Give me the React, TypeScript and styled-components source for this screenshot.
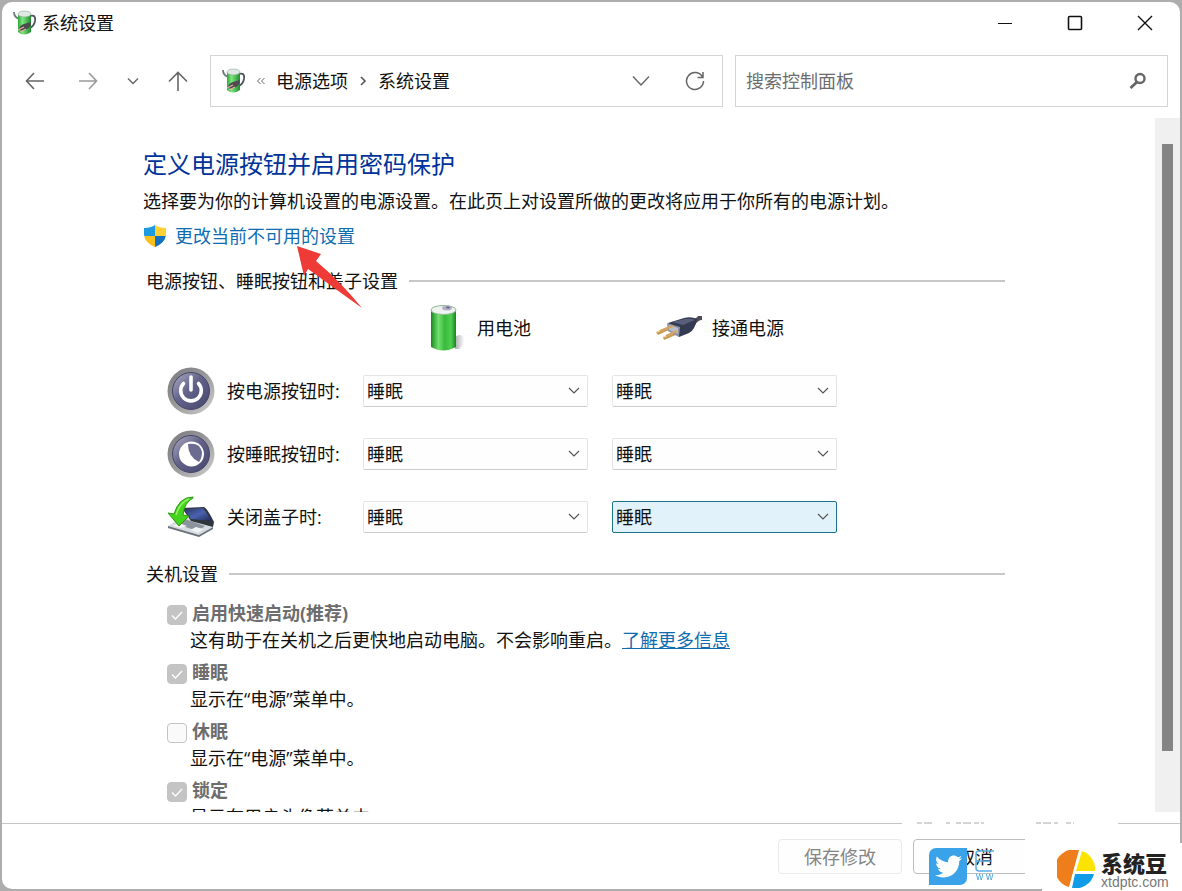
import React from "react";
import styled, { createGlobalStyle } from "styled-components";
import { FaTwitter } from "react-icons/fa";

const FONT = '"Open Sans", "Noto Sans CJK SC", sans-serif';

const GlobalStyle = createGlobalStyle`
  * { box-sizing: border-box; }
  body {
    margin: 0;
    background: #adadad;
    color: #111;
    font-family: ${FONT};
    font-size: 18px;
    line-height: 26px;
  }
  button, input, select { font: inherit; color: inherit; margin: 0; }
`;

const Desktop = styled.div`
  height: 100vh;
  padding: 2px;
`;

const Window = styled.div`
  position: relative;
  display: flex;
  flex-direction: column;
  height: 100%;
  overflow: hidden;
  background: #fff;
  border-radius: 10px;
`;

const TitleBar = styled.header`
  display: flex;
  align-items: center;
  gap: 5px;
  height: 41px;
  padding-left: 11px;
`;

const WindowTitle = styled.h1`
  flex: 1;
  margin: 0;
  font-size: 18px;
  font-weight: 400;
`;

const Caption = styled.div`
  display: flex;
`;

const IconButton = styled.button<{ $w: number }>`
  display: flex;
  align-items: center;
  justify-content: center;
  flex: none;
  width: ${(p) => p.$w}px;
  height: 40px;
  padding: 0;
  border: 0;
  background: none;
`;

const NavBar = styled.nav`
  display: flex;
  align-items: center;
  margin-top: 12px;
  padding: 0 12px 0 8px;
`;

const AddressBox = styled.div`
  display: flex;
  align-items: center;
  flex: 513 1 513px;
  height: 52px;
  margin-left: 4px;
  padding-left: 11px;
  border: 1px solid #d5d5d5;
`;

const Crumbs = styled.div`
  display: flex;
  align-items: center;
  flex: 1;
`;

const Crumb = styled.a`
  color: #111;
  text-decoration: none;
  white-space: nowrap;
`;

const CrumbMark = styled.svg`
  margin: 0 10px;
`;

const SearchBox = styled.label`
  display: flex;
  align-items: center;
  flex: 433 1 433px;
  height: 52px;
  margin-left: 12px;
  padding: 0 20px 0 10px;
  border: 1px solid #d5d5d5;
`;

const SearchInput = styled.input`
  flex: 1;
  min-width: 0;
  padding: 0;
  border: 0;
  outline: 0;
  background: none;
  &::placeholder { color: #6d6d6d; opacity: 1; }
`;

const Body = styled.div`
  display: flex;
  flex: 1;
  min-height: 0;
  margin: 11px 0;
`;

const Content = styled.main`
  flex: 1;
  overflow: hidden;
  padding: 28px 150px 0 141px;
`;

const ScrollTrack = styled.div`
  display: flex;
  width: 25px;
  padding: 26px 7px 61px;
  background: #f0f0f0;
`;

const ScrollThumb = styled.div`
  flex: 1;
  background: #858585;
`;

const PageTitle = styled.h2`
  margin: 0;
  color: #003399;
  font-size: 24px;
  font-weight: 400;
  line-height: 36px;
`;

const Lead = styled.p`
  margin: 6px 0 9px;
`;

const AdminLink = styled.a`
  display: flex;
  align-items: center;
  gap: 8px;
  color: #0f6cb0;
  text-decoration: none;
`;

const Section = styled.section`
  padding-left: 3px;
`;

const SectionTitle = styled.h3`
  display: flex;
  align-items: center;
  gap: 11px;
  margin: 0;
  padding-top: 19px;
  font-size: 18px;
  font-weight: 400;
  &::after {
    content: "";
    flex: 1;
    height: 2px;
    background: #c8c8c8;
  }
`;

const Grid = styled.div`
  display: grid;
  grid-template-columns: 60px 136px 225px 225px;
  grid-template-rows: 62px;
  grid-auto-rows: 63px;
  align-items: center;
  margin: 3px 0 -6px 21px;
`;

const ColumnHead = styled.div<{ $col: number }>`
  display: flex;
  align-items: center;
  gap: 9px;
  grid-column: ${(p) => p.$col};
  padding-left: ${(p) => (p.$col === 3 ? 67 : 67)}px;
`;

const SelectShell = styled.div<{ $second?: boolean }>`
  position: relative;
  width: 225px;
  margin-left: ${(p) => (p.$second ? 24 : 0)}px;
`;

const Select = styled.select<{ $active?: boolean }>`
  display: block;
  width: 100%;
  height: 32px;
  padding: 0 32px 0 3px;
  appearance: none;
  border: 1px solid ${(p) => (p.$active ? "#1b7289" : "#e3e5e7")};
  border-bottom-color: ${(p) => (p.$active ? "#1b7289" : "#cccccc")};
  border-radius: 2px;
  background: ${(p) => (p.$active ? "#e2f2fb" : "#fefefe")};
  outline: 0;
`;

const SelectArrow = styled.svg`
  position: absolute;
  right: 7px;
  top: 11px;
  pointer-events: none;
`;

const Options = styled.div`
  padding: 13px 0 0 21px;
`;

const Option = styled.div`
  display: grid;
  grid-template-columns: 23px 1fr;
  align-items: center;
  column-gap: 2px;
  height: 59px;
  grid-template-rows: 26px 28px;
`;

const OptionLabel = styled.label`
  color: #6d6d6d;
  font-weight: 700;
`;

const OptionNote = styled.p`
  grid-column: 1 / -1;
  margin: 0;
  padding-left: 23px;
  white-space: nowrap;
`;

const InlineLink = styled.a`
  color: #0f6cb0;
`;

const TickShell = styled.span`
  position: relative;
  display: flex;
  width: 20px;
  height: 20px;
  margin-top: 4px;
`;

const Tick = styled.input`
  width: 20px;
  height: 20px;
  appearance: none;
  border: 1px solid #c4c4c4;
  border-radius: 4px;
  background: #fafafa;
  &:checked { background: #c4c4c4; }
`;

const TickMark = styled.svg`
  position: absolute;
  inset: 0;
  pointer-events: none;
`;

const Footer = styled.footer`
  display: flex;
  justify-content: flex-end;
  gap: 11px;
  height: 66px;
  padding: 15px 143px 0 0;
  border-top: 1px solid #c6c6c6;
`;

const FooterButton = styled.button`
  width: 124px;
  height: 35px;
  padding: 0;
  border: 1px solid #bdbdbd;
  border-radius: 4px;
  background: #fefefe;
  &:disabled { color: #858585; border-color: #e9e9e9; }
`;

const Watermark = styled.div`
  position: fixed;
  right: 57px;
  bottom: 2px;
  width: 225px;
  height: 71px;
  pointer-events: none;
`;

const Badge = styled.div`
  position: absolute;
  left: 29px;
  top: 30px;
  display: flex;
  align-items: center;
  justify-content: center;
  width: 38px;
  height: 37px;
  border-radius: 7px 0 7px 0;
  background: #3aa2e9;
  color: #fff;
`;

const WatermarkText = styled.span`
  position: absolute;
  left: 76px;
  top: 52px;
  color: #44a0dc;
  font: 10px/14px "Liberation Sans", sans-serif;
  word-spacing: normal;
  white-space: pre;
`;

const Brand = styled.div`
  position: fixed;
  right: 0;
  bottom: 0;
  display: flex;
  align-items: center;
  gap: 6px;
  width: 140px;
  height: 48px;
  padding: 4px 0 0 15px;
  background: #fff;
`;

const BrandText = styled.div`
  display: flex;
  flex-direction: column;
`;

const BrandName = styled.strong`
  color: #222;
  font: 900 22px/26px "Noto Sans CJK SC", sans-serif;
`;

const BrandSite = styled.span`
  color: #777;
  font: 14px/14px "Liberation Sans", sans-serif;
`;

function PowerCupIcon() {
  return (
    <svg width="24" height="26" viewBox="0 0 24 26" aria-hidden="true">
      <defs>
        <linearGradient id="cup" x1="0" x2="1">
          <stop offset="0" stopColor="#2fa83a" />
          <stop offset="0.35" stopColor="#7be67c" />
          <stop offset="1" stopColor="#1f8b2d" />
        </linearGradient>
      </defs>
      <path d="M1 2 Q1 7 6 9" fill="none" stroke="#6d7880" strokeWidth="1.800" />
      <path d="M17 6 Q23 4 22 11 Q21 16 17 18" fill="none" stroke="#4d585e" strokeWidth="1.800" />
      <path d="M5 4 V22 Q11 27 18 22 V4Z" fill="url(#cup)" />
      <ellipse cx="11.500" cy="4" rx="6.500" ry="3" fill="#dfe7e3" stroke="#8fa79a" strokeWidth="0.600" />
      <path d="M6 19 Q7 15 11 14 L18 12 Q18 18 12 20 Q8 22 6 19Z" fill="#4d4a52" />
      <path d="M5 20 L11 17 M7 22 L13 19" stroke="#e0b19c" strokeWidth="1.200" />
    </svg>
  );
}

function ShieldIcon() {
  return (
    <svg width="24" height="24" viewBox="0 0 24 24" aria-hidden="true">
      <clipPath id="shield">
        <path d="M12 1 Q16 4 23 4 V11 Q22 19 12 23 Q2 19 1 11 V4 Q8 4 12 1Z" />
      </clipPath>
      <g clipPath="url(#shield)">
        <path d="M0 0H12V12H0Z" fill="#1e9be0" />
        <path d="M12 0H24V12H12Z" fill="#ffd034" />
        <path d="M0 12H12V24H0Z" fill="#fbc01b" />
        <path d="M12 12H24V24H12Z" fill="#1470c0" />
      </g>
    </svg>
  );
}

function BatteryIcon() {
  return (
    <svg width="38" height="48" viewBox="0 0 38 48" aria-hidden="true">
      <defs>
        <linearGradient id="cell" x1="0" x2="1">
          <stop offset="0" stopColor="#178a1e" />
          <stop offset="0.3" stopColor="#72e070" />
          <stop offset="0.55" stopColor="#39b93c" />
          <stop offset="0.8" stopColor="#4fcf50" />
          <stop offset="1" stopColor="#178320" />
        </linearGradient>
        <linearGradient id="cellShade" x1="0" x2="1">
          <stop offset="0" stopColor="#8b8b8b" />
          <stop offset="1" stopColor="#ffffff" />
        </linearGradient>
      </defs>
      <path d="M25 45 V33 Q30 29 34 33 Q36 40 29 45Z" fill="url(#cellShade)" opacity="0.700" />
      <path d="M1 6 V43 Q13 50 26 43 V6Z" fill="url(#cell)" />
      <ellipse cx="13.500" cy="6" rx="12.500" ry="4.500" fill="#eef3f0" stroke="#8fb894" />
      <ellipse cx="17" cy="4" rx="5" ry="2.500" fill="#b6afc6" />
      <ellipse cx="18" cy="3.500" rx="2" ry="1" fill="#6b6384" />
    </svg>
  );
}

function PlugIcon() {
  return (
    <svg width="48" height="28" viewBox="0 0 48 28" aria-hidden="true">
      <path d="M1 18 L14 12 L16 15 L3 21Z M8 23 L21 17 L23 20 L9 26Z" fill="#c99a52" />
      <path d="M2 18 L15 12.500 M9 23 L22 17.500" stroke="#f4dfa8" strokeWidth="1.200" />
      <path d="M37 6 Q42 4 43 2 H47 V6 Q43 6 40 11Z" fill="#4b4c57" />
      <path d="M13 9 L29 4 Q36 2 42 5 Q40 16 34 19 L24 23Z" fill="#353a53" />
      <path d="M17 8 L30 5 Q36 4 40 6 L28 11Z" fill="#59607c" />
      <path d="M12 9 L25 13 L24 23 L18 20 L13 17Z" fill="#8c93a8" />
      <path d="M14 11 L23 14 V20 L14 16Z" fill="#b9bdc9" />
      <path d="M5 17 L18 12 M11 22 L22 17" stroke="#d2a560" strokeWidth="2" />
    </svg>
  );
}

function RoundButtonIcon({ kind }: { kind: "power" | "sleep" }) {
  return (
    <svg width="48" height="48" viewBox="0 0 48 48" aria-hidden="true">
      <defs>
        <linearGradient id="rim" x1="0" y1="0" x2="1" y2="1">
          <stop offset="0" stopColor="#77777d" />
          <stop offset="0.5" stopColor="#9a9a9c" />
          <stop offset="1" stopColor="#d2d1cf" />
        </linearGradient>
        <linearGradient id="face" x1="0" y1="0" x2="1" y2="1">
          <stop offset="0" stopColor="#b0b0c4" />
          <stop offset="0.45" stopColor="#62628a" />
          <stop offset="1" stopColor="#45456c" />
        </linearGradient>
      </defs>
      <circle cx="24" cy="24" r="23.500" fill="url(#rim)" />
      <circle cx="24" cy="24" r="18.500" fill="url(#face)" stroke="#45456a" strokeWidth="1" />
      {kind === "power" ? (
        <g fill="none" stroke="#fff" strokeWidth="3.600">
          <path d="M16.500 16.500 A10.300 10.300 0 1 0 31.500 16.500" strokeLinecap="round" />
          <path d="M24 10 V23" strokeLinecap="round" />
        </g>
      ) : (
        <g>
          <circle cx="24.500" cy="24" r="12.500" fill="#fff" />
          <path d="M21 14 Q33 12 35 22 Q35 28 32 32 Q21 27 21 14Z" fill="#6c6c92" />
        </g>
      )}
    </svg>
  );
}

function LidIcon() {
  return (
    <svg width="48" height="42" viewBox="0 0 48 42" aria-hidden="true">
      <defs>
        <linearGradient id="lid" x1="0" y1="0" x2="1" y2="1">
          <stop offset="0" stopColor="#29345f" />
          <stop offset="0.5" stopColor="#4a62b0" />
          <stop offset="1" stopColor="#1d2850" />
        </linearGradient>
      </defs>
      <path d="M1 30 L17 20 L46 31 L32 39Z" fill="#d6dbe0" />
      <path d="M1 30 L32 39 L46 31 V33 L32 41 L1 32Z" fill="#69717a" />
      <path d="M9 28 L18 23 L38 30 L31 35Z" fill="#8b949d" />
      <path d="M6 30 L12 27 L20 30 L14 32Z M23 34 L29 31 L36 33 L31 37Z" fill="#f0f3f5" />
      <path d="M15 12 L37 11 Q40 12 47 26 L46 31 L24 25Z" fill="#30343d" />
      <path d="M17 13 L36 12 L45 25 L24 23Z" fill="url(#lid)" />
      <path d="M26 1 Q12 1 7 18 L1 17 L12 30 L22 20 L16 19 Q17 7 26 2Z" fill="#45d41c" stroke="#2a9a12" />
      <path d="M22 3 Q13 6 9 19" fill="none" stroke="#97f070" strokeWidth="1.500" />
    </svg>
  );
}

const Arrow = styled.svg`
  position: absolute;
  left: 294px;
  top: 243px;
  pointer-events: none;
`;

type DropProps = { id: string; label: string; active?: boolean; second?: boolean };

function Dropdown({ id, label, active, second }: DropProps) {
  return (
    <SelectShell $second={second}>
      <Select id={id} aria-label={label} $active={active} defaultValue="sleep">
        <option value="sleep">睡眠</option>
      </Select>
      <SelectArrow width="14" height="10" viewBox="0 0 14 10" aria-hidden="true">
        <path d="M2 2 L7 7 L12 2" fill="none" stroke="#555" strokeWidth="1.200" />
      </SelectArrow>
    </SelectShell>
  );
}

const rows = [
  { id: "power", label: "按电源按钮时:", icon: <RoundButtonIcon kind="power" /> },
  { id: "sleep", label: "按睡眠按钮时:", icon: <RoundButtonIcon kind="sleep" /> },
  { id: "lid", label: "关闭盖子时:", icon: <LidIcon /> },
];

const options = [
  { id: "fast", label: "启用快速启动(推荐)", note: "这有助于在关机之后更快地启动电脑。不会影响重启。", checked: true, more: true },
  { id: "opt-sleep", label: "睡眠", note: "显示在“电源”菜单中。", checked: true },
  { id: "hibernate", label: "休眠", note: "显示在“电源”菜单中。", checked: false },
  { id: "lock", label: "锁定", note: "显示在用户头像菜单中。", checked: true },
];

export default function App() {
  return (
    <Desktop>
      <GlobalStyle />
      <Window>
        <TitleBar>
          <PowerCupIcon />
          <WindowTitle>系统设置</WindowTitle>
          <Caption>
            <IconButton $w={70} aria-label="最小化">
              <svg width="16" height="16"><path d="M1 8.500H15" stroke="#111" /></svg>
            </IconButton>
            <IconButton $w={70} aria-label="最大化">
              <svg width="16" height="16"><rect x="1.500" y="1.500" width="13" height="13" rx="1" fill="none" stroke="#111" strokeWidth="1.600" /></svg>
            </IconButton>
            <IconButton $w={70} aria-label="关闭">
              <svg width="16" height="16"><path d="M1 1L15 15M15 1L1 15" stroke="#111" strokeWidth="1.400" /></svg>
            </IconButton>
          </Caption>
        </TitleBar>

        <NavBar>
          <IconButton $w={50} aria-label="后退">
            <svg width="20" height="18" fill="none" stroke="#666" strokeWidth="1.600"><path d="M19 9H2M9 1L1.500 9L9 17" /></svg>
          </IconButton>
          <IconButton $w={56} aria-label="前进">
            <svg width="20" height="18" fill="none" stroke="#999" strokeWidth="1.600"><path d="M1 9H18M11 1L18.500 9L11 17" /></svg>
          </IconButton>
          <IconButton $w={34} aria-label="最近浏览的位置">
            <svg width="12" height="8" fill="none" stroke="#666" strokeWidth="1.400"><path d="M1 1.500L6 6.500L11 1.500" /></svg>
          </IconButton>
          <IconButton $w={56} aria-label="上移">
            <svg width="20" height="20" fill="none" stroke="#666" strokeWidth="1.600"><path d="M10 20V2M1 10.500L10 1.500L19 10.500" /></svg>
          </IconButton>
          <AddressBox>
            <PowerCupIcon />
            <Crumbs>
              <CrumbMark width="10" height="8" fill="none" stroke="#666"><path d="M4.500 1L1.500 4L4.500 7M8.500 1L5.500 4L8.500 7" /></CrumbMark>
              <Crumb href="#power">电源选项</Crumb>
              <CrumbMark width="10" height="10" fill="none" stroke="#555" strokeWidth="1.600"><path d="M3 1L7 5L3 9" /></CrumbMark>
              <Crumb href="#system">系统设置</Crumb>
            </Crumbs>
            <IconButton $w={54} aria-label="以前的位置">
              <svg width="18" height="12" fill="none" stroke="#666" strokeWidth="1.400"><path d="M1 1.500L9 10L17 1.500" /></svg>
            </IconButton>
            <IconButton $w={54} aria-label="刷新">
              <svg width="20" height="20" fill="none" stroke="#666" strokeWidth="1.500"><path d="M17.500 6A8.500 8.500 0 1 0 18.500 10M18 1V6.500H12.500" /></svg>
            </IconButton>
          </AddressBox>
          <SearchBox>
            <SearchInput placeholder="搜索控制面板" aria-label="搜索控制面板" />
            <svg width="18" height="18" fill="none" stroke="#666" aria-hidden="true">
              <circle cx="11" cy="6.500" r="4.500" strokeWidth="2.400" />
              <path d="M8 10L1.500 16" strokeWidth="2.800" />
            </svg>
          </SearchBox>
        </NavBar>

        <Body>
          <Content>
            <PageTitle>定义电源按钮并启用密码保护</PageTitle>
            <Lead>选择要为你的计算机设置的电源设置。在此页上对设置所做的更改将应用于你所有的电源计划。</Lead>
            <AdminLink href="#unlock"><ShieldIcon />更改当前不可用的设置</AdminLink>

            <Section>
              <SectionTitle>电源按钮、睡眠按钮和盖子设置</SectionTitle>
              <Grid>
                <ColumnHead $col={3}><BatteryIcon />用电池</ColumnHead>
                <ColumnHead $col={4}><PlugIcon />接通电源</ColumnHead>
                {rows.map((r) => (
                  <React.Fragment key={r.id}>
                    {r.icon}
                    <label htmlFor={r.id + "-battery"}>{r.label}</label>
                    <Dropdown id={r.id + "-battery"} label={r.label + "用电池"} />
                    <Dropdown id={r.id + "-plugged"} label={r.label + "接通电源"} second active={r.id === "lid"} />
                  </React.Fragment>
                ))}
              </Grid>
            </Section>

            <Section>
              <SectionTitle>关机设置</SectionTitle>
              <Options>
                {options.map((o) => (
                  <Option key={o.id}>
                    <TickShell>
                      <Tick type="checkbox" id={o.id} defaultChecked={o.checked} disabled />
                      {o.checked && (
                        <TickMark width="20" height="20" aria-hidden="true">
                          <path d="M5 10.500L8.500 14L15 7" fill="none" stroke="#fff" strokeWidth="1.300" />
                        </TickMark>
                      )}
                    </TickShell>
                    <OptionLabel htmlFor={o.id}>{o.label}</OptionLabel>
                    <OptionNote>
                      {o.note}
                      {o.more && <InlineLink href="#more">了解更多信息</InlineLink>}
                    </OptionNote>
                  </Option>
                ))}
              </Options>
            </Section>
          </Content>
          <ScrollTrack><ScrollThumb /></ScrollTrack>
        </Body>

        <Footer>
          <FooterButton disabled>保存修改</FooterButton>
          <FooterButton>取消</FooterButton>
        </Footer>

        <Arrow width="70" height="64" viewBox="0 0 70 64" aria-hidden="true">
          <path d="M1 1L25 9L20 16Q44 36 66 63Q34 40 12 24L8 31Z" fill="#ee3b37" />
        </Arrow>
      </Window>

      <Watermark aria-hidden="true">
        <svg width="225" height="71">
          <path d="M2 5H218" stroke="#fff" strokeWidth="3" />
          <path d="M17 5H34M46 5H50M56 5H84M136 5H158M166 5H174" stroke="#aaa" strokeDasharray="5 2 8 3" />
          <path d="M125 18H225V56H125Z" fill="#fff" />
          <path d="M94 33H79Q76 33 76 36V50Q76 53 79 53H92M76 43H92" fill="none" stroke="#5aaee4" strokeWidth="1.500" />
        </svg>
        <Badge><FaTwitter size={27} /></Badge>
        <WatermarkText>w w</WatermarkText>
      </Watermark>

      <Brand>
        <svg width="38" height="38" viewBox="0 0 38 38" aria-hidden="true">
          <path d="M22 0A19 19 0 0 0 12 37Z" fill="#ee7d1b" />
          <path d="M25 1A19 19 0 0 1 38 21H19Z" fill="#fce300" />
          <path d="M18 24H37A19 19 0 0 1 15 38Z" fill="#119ce8" />
        </svg>
        <BrandText>
          <BrandName>系统豆</BrandName>
          <BrandSite>xtdptc.com</BrandSite>
        </BrandText>
      </Brand>
    </Desktop>
  );
}
